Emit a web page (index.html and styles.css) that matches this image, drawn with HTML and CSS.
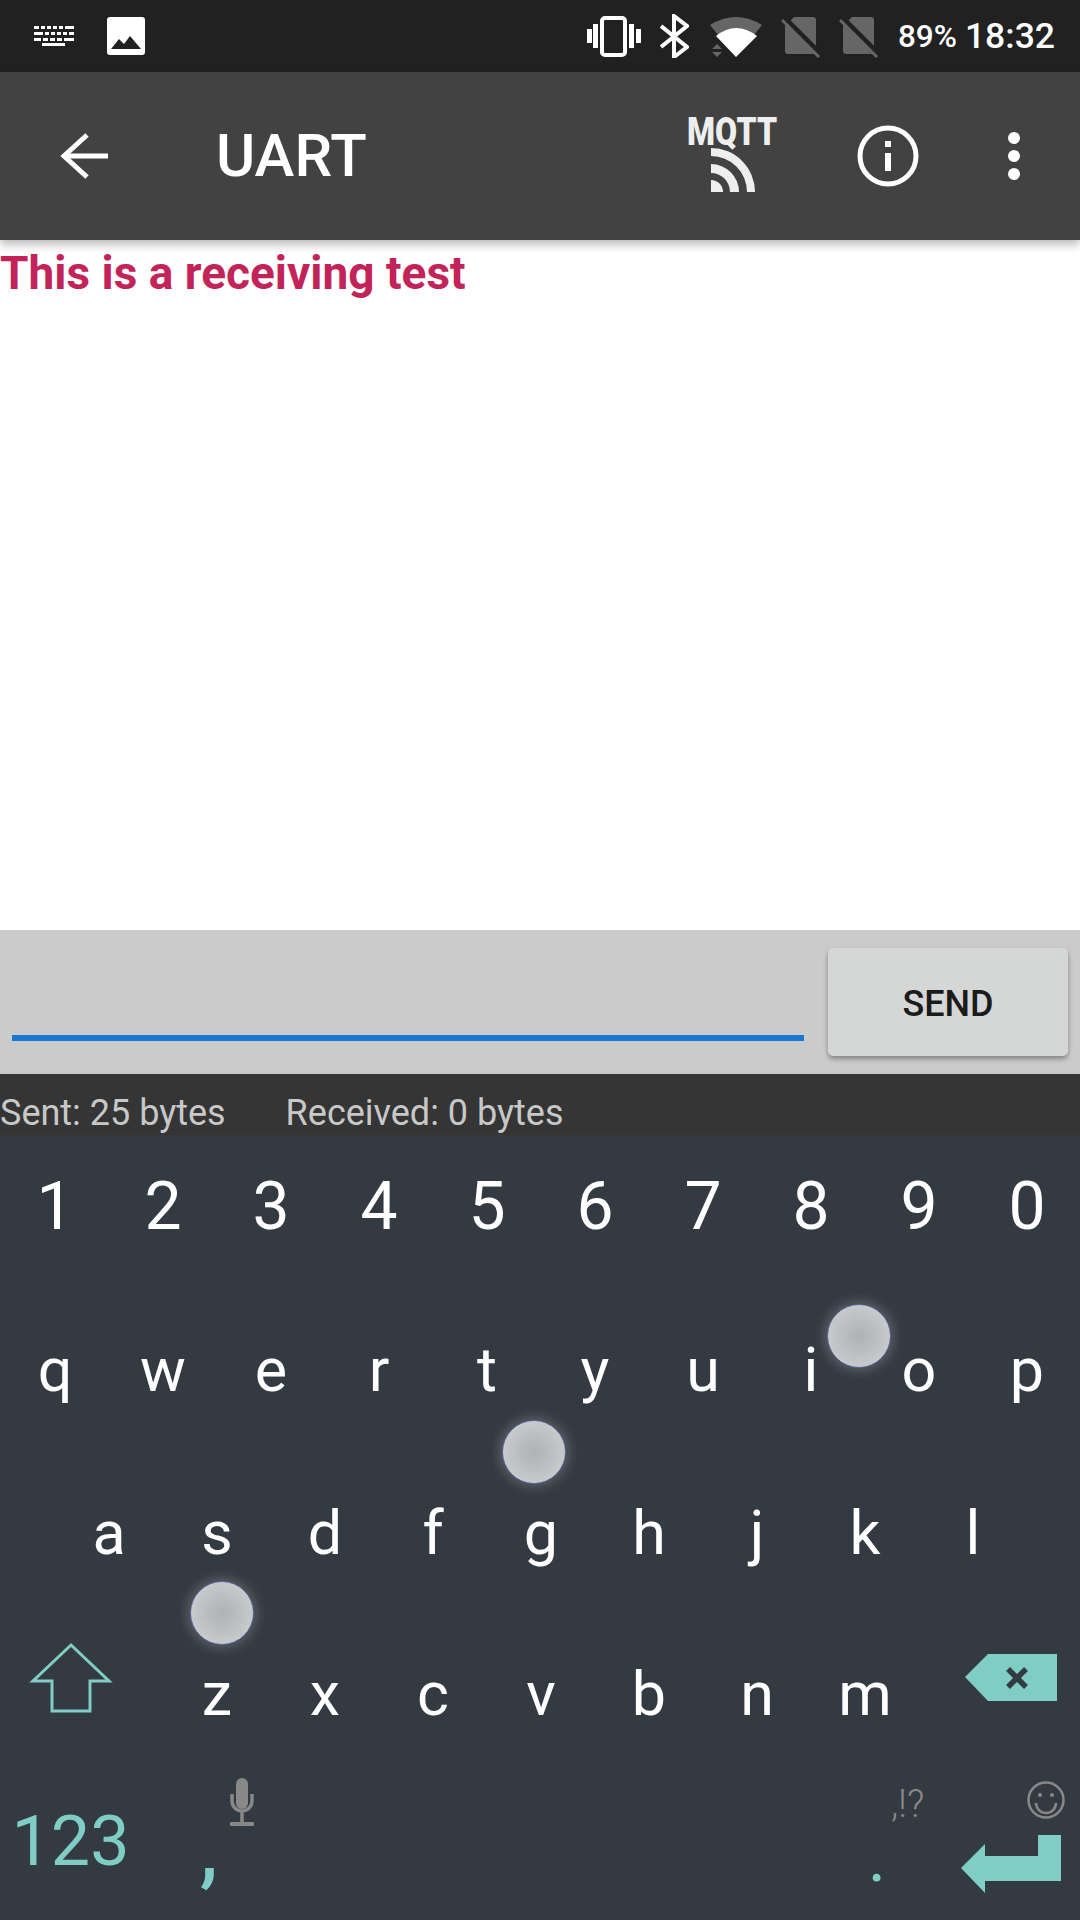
FILE: index.html
```html
<!DOCTYPE html>
<html lang="en">
<head>
<meta charset="utf-8">
<title>UART</title>
<link rel="stylesheet" href="styles.css">
</head>
<body>
<div class="screen">
  <header class="status">
    <svg class="ic" width="40" height="22" viewBox="34 26 40 22" fill="#fff">
      <path d="M34 27h5v3h-5zM41 27h4v3h-4zM47 27h4v3h-4zM53 27h4v3h-4zM59 27h4v3h-4zM65 27h9v3h-9zM34 33h9v3h-9zM45 33h4v3h-4zM51 33h4v3h-4zM57 33h4v3h-4zM63 33h4v3h-4zM69 33h5v3h-5zM34 39h7v3h-7zM43 39h5v3h-5zM50 39h5v3h-5zM57 39h5v3h-5zM64 39h10v3H64zM42 44h23v3H42z"/>
    </svg>
    <svg class="ic img" width="38" height="38" viewBox="107 17 38 38">
      <rect x="107" y="17" width="38" height="38" rx="3" fill="#fff"/>
      <path d="M111 49l8-10 5 5 6-8 11 13z" fill="#212121"/>
    </svg>
    <div class="grow"></div>
    <div class="status-right">
      <svg class="ic" width="56" height="44" viewBox="586 14 56 44" fill="#fff">
        <rect x="602" y="18" width="23" height="37" rx="3" fill="none" stroke="#fff" stroke-width="4"/>
        <path d="M587 29h5v14h-5zM593 24h5v24h-5zM629 24h5v24h-5zM636 29h5v14h-5z"/>
      </svg>
      <svg class="ic" width="29" height="44" viewBox="660 14 29 44">
        <path d="M661 26L687 47 674 57V16L687 26 661 47" fill="none" stroke="#fff" stroke-width="4"/>
      </svg>
      <svg class="ic" width="56" height="44" viewBox="707 14 56 44">
        <path d="M710 25Q736 9 762 25L736 57z" fill="#666"/>
        <path d="M716 36Q736 20 757 36L736 57z" fill="#fff"/>
        <path d="M717 44l5 5h-10zM717 57l-5-5h10z" fill="#666"/>
      </svg>
      <svg class="ic" width="40" height="44" viewBox="781 14 40 44">
        <path d="M794 17h19a3 3 0 0 1 3 3v31a3 3 0 0 1-3 3h-25a3 3 0 0 1-3-3V26z" fill="#666"/>
        <path d="M780 14l40 40" stroke="#212121" stroke-width="6"/>
        <path d="M782 20l37 37" stroke="#666" stroke-width="3"/>
      </svg>
      <svg class="ic" width="40" height="44" viewBox="781 14 40 44">
        <path d="M794 17h19a3 3 0 0 1 3 3v31a3 3 0 0 1-3 3h-25a3 3 0 0 1-3-3V26z" fill="#666"/>
        <path d="M780 14l40 40" stroke="#212121" stroke-width="6"/>
        <path d="M782 20l37 37" stroke="#666" stroke-width="3"/>
      </svg>
      <div class="clock"><span class="pct">89%</span><span class="time">18:32</span></div>
    </div>
  </header>

  <nav class="toolbar">
    <svg class="ic back" width="52" height="52" viewBox="58 130 52 52">
      <path d="M108 156H65M87 135L64 156 87 177" fill="none" stroke="#fff" stroke-width="5"/>
    </svg>
    <h1 class="title">UART</h1>
    <div class="grow"></div>
    <div class="mqtt">
      <span class="mqtt-text">MQTT</span>
      <svg class="ic mqtt-rss" width="46" height="44" viewBox="711 148 46 44" fill="#eee">
        <path d="M711 180a12 12 0 0 1 12 12h-12z"/>
        <path d="M711 164a28 28 0 0 1 28 28h-9a19 19 0 0 0-19-19z"/>
        <path d="M711 148a44 44 0 0 1 44 44h-8a36 36 0 0 0-36-36z"/>
      </svg>
    </div>
    <svg class="ic info" width="64" height="64" viewBox="856 124 64 64">
      <circle cx="888" cy="156" r="28" fill="none" stroke="#fff" stroke-width="5"/>
      <path d="M885 141h6v6h-6zM885 153h6v18h-6z" fill="#fff"/>
    </svg>
    <svg class="ic more" width="12" height="48" viewBox="1008 132 12 48" fill="#fff">
      <circle cx="1014" cy="138" r="6"/><circle cx="1014" cy="156" r="6"/><circle cx="1014" cy="174" r="6"/>
    </svg>
  </nav>

  <main class="log">This is a receiving test</main>

  <section class="composer">
    <div class="field"></div>
    <button class="send">SEND</button>
  </section>

  <section class="counters">
    <span class="sent">Sent: 25 bytes</span>
    <span>Received: 0 bytes</span>
  </section>

  <section class="keyboard">
    <div class="row row-digits">
      <span class="key">1</span><span class="key">2</span><span class="key">3</span><span class="key">4</span><span class="key">5</span><span class="key">6</span><span class="key">7</span><span class="key">8</span><span class="key">9</span><span class="key">0</span>
    </div>
    <div class="row">
      <span class="key">q</span><span class="key">w</span><span class="key">e</span><span class="key">r</span><span class="key">t</span><span class="key">y</span><span class="key">u</span><span class="key">i</span><span class="key">o</span><span class="key">p</span>
    </div>
    <div class="row row-home">
      <span class="key">a</span><span class="key">s</span><span class="key">d</span><span class="key">f</span><span class="key">g</span><span class="key">h</span><span class="key">j</span><span class="key">k</span><span class="key">l</span>
    </div>
    <div class="row row-lower">
      <span class="key wide shift">
        <svg width="84" height="72" viewBox="29 1641 84 72">
          <path d="M71 1644L33 1680H52V1710H90V1680H109z" fill="none" stroke="#7fcdc4" stroke-width="3"/>
        </svg>
      </span>
      <span class="key">z</span><span class="key">x</span><span class="key">c</span><span class="key">v</span><span class="key">b</span><span class="key">n</span><span class="key">m</span>
      <span class="key wide del">
        <svg width="94" height="48" viewBox="964 1653 94 48">
          <path d="M965 1676L988 1653H1057V1700H988z" fill="#7fcdc4"/>
          <path d="M1008 1668L1026 1686M1026 1668L1008 1686" stroke="#343a41" stroke-width="5.5"/>
        </svg>
      </span>
    </div>
    <div class="row row-bottom">
      <span class="key num">123</span>
      <span class="key comma">,
        <svg class="hint-mic" width="26" height="50" viewBox="230 1778 26 50">
          <rect x="237" y="1779" width="12" height="31" rx="6" fill="#888"/>
          <path d="M233 1795v7a10 10 0 0 0 20 0v-7M243 1812v13" fill="none" stroke="#888" stroke-width="3.5"/>
          <rect x="231" y="1823" width="24" height="4" rx="1" fill="#888"/>
        </svg>
      </span>
      <div class="grow"></div>
      <span class="key dot">.
        <span class="hint-punct">,!?</span>
      </span>
      <span class="key enter">
        <svg class="hint-smile" width="40" height="40" viewBox="1026 1778 40 40">
          <circle cx="1046" cy="1798" r="17.5" fill="none" stroke="#888" stroke-width="2.5"/>
          <circle cx="1040" cy="1793" r="2" fill="#888"/><circle cx="1052" cy="1793" r="2" fill="#888"/>
          <path d="M1036 1801a10 10 0 0 0 20 0" fill="none" stroke="#888" stroke-width="2.5"/>
        </svg>
        <svg class="enter-arrow" width="102" height="60" viewBox="960 1834 102 60">
          <path d="M961 1868L985 1844V1856H1038V1835H1061V1881H985V1893z" fill="#7fcdc4"/>
        </svg>
      </span>
    </div>
    <span class="touch touch-i"></span>
    <span class="touch touch-g"></span>
    <span class="touch touch-z"></span>
  </section>
</div>
</body>
</html>
```
FILE: styles.css
```css
* { box-sizing: border-box; }
html, body { margin: 0; padding: 0; background: #343a41; }
.screen {
  width: 1080px;
  height: 1920px;
  overflow: hidden;
  display: flex;
  flex-direction: column;
  font-family: Roboto, "Noto Sans", sans-serif;
}
.ic { display: block; flex: none; }
.grow { flex: 1; }

.status {
  height: 72px;
  flex: none;
  background: #212121;
  display: flex;
  align-items: center;
  padding: 0 25px 0 34px;
  color: #fff;
}
.img { margin-left: 33px; }
.status-right { display: flex; align-items: center; gap: 18px; }
.clock { display: flex; align-items: center; gap: 8px; margin-left: 1px; }
.pct { font-size: 31.5px; font-weight: 500; }
.time { font-size: 35.5px; font-weight: 500; }

.toolbar {
  height: 168px;
  flex: none;
  background: #424242;
  display: flex;
  align-items: center;
  padding: 0 60px 0 58px;
  color: #fff;
  position: relative;
  box-shadow: 0 4px 10px rgba(0, 0, 0, 0.3);
  z-index: 1;
}
.title { margin: 0 0 0 106px; font-size: 60px; font-weight: 500; line-height: 1; }
.mqtt { width: 90px; margin-top: -4px; flex: none; }
.mqtt-text {
  display: block;
  width: 110px;
  height: 30px;
  font-size: 39px;
  font-weight: 900;
  line-height: 32px;
  color: #eee;
  white-space: nowrap;
  transform: scaleX(0.82);
  transform-origin: left center;
}
.mqtt-rss { margin: 2px 0 0 24px; }
.info { margin-left: 79px; }
.more { margin-left: 88px; }

.log {
  height: 690px;
  flex: none;
  background: #fff;
  color: #c2245a;
  font-size: 46px;
  font-weight: 700;
  line-height: 66px;
}

.composer {
  height: 144px;
  flex: none;
  background: #cbcbcb;
  display: flex;
  align-items: flex-start;
  padding: 18px 12px 0;
}
.field {
  width: 792px;
  height: 6px;
  margin-top: 87px;
  background: #1976d2;
}
.send {
  width: 240px;
  height: 108px;
  margin-left: 24px;
  padding: 4px 0 0;
  border: 0;
  border-radius: 5px;
  background: #d5d6d6;
  color: #1b1b1b;
  font-family: inherit;
  font-size: 36px;
  font-weight: 500;
  box-shadow: 0 3px 5px rgba(0, 0, 0, 0.35);
}

.counters {
  height: 61px;
  flex: none;
  background: #353535;
  color: #c8c8c8;
  font-size: 36px;
  line-height: 78px;
  white-space: nowrap;
  overflow: hidden;
}
.sent { margin-right: 51px; }

.keyboard {
  flex: 1;
  background: #343a41;
  position: relative;
  color: #fff;
}
.row { display: flex; height: 163px; align-items: center; }
.row-digits { margin-top: -10px; }
.row-digits .key { font-size: 66px; }
.row-home { padding-left: 54px; }
.row-lower { margin-top: -2px; margin-bottom: 2px; }
.key {
  width: 108px;
  padding-left: 2px;
  flex: none;
  text-align: center;
  font-size: 61px;
  line-height: 70px;
  display: block;
}
.wide { width: 162px; padding-left: 0; }
.shift { padding-right: 20px; display: flex; justify-content: center; margin-bottom: 32px; }
.del { display: flex; justify-content: flex-end; padding-right: 22px; margin-bottom: 32px; }
.row-bottom { position: relative; margin-top: -18px; }
.num { width: 141px; padding-left: 0; font-size: 70px; color: #7fcdc4; }
.comma {
  color: #7fcdc4;
  font-size: 82px;
  font-weight: 500;
  position: relative;
  margin-top: 16px;
  margin-left: 13px;
}
.hint-mic { position: absolute; left: 75px; top: -37px; }
.dot {
  color: #7fcdc4;
  font-size: 70px;
  position: relative;
  margin-top: 32px;
  padding-left: 26px;
}
.hint-punct { position: absolute; left: 81px; top: -53px; font-size: 38px; font-weight: 300; color: #888; }
.enter { width: 162px; padding-left: 0; position: relative; height: 70px; display: flex; justify-content: flex-end; padding-right: 18px; }
.enter-arrow { margin-top: 28px; }
.hint-smile { position: absolute; right: 14px; top: -26px; }

.touch {
  position: absolute;
  width: 64px;
  height: 64px;
  border-radius: 50%;
  background: radial-gradient(circle, #aeb2b5 0%, #c9cbcc 75%);
  border: 1.5px solid #5f6ba6;
  box-shadow: 0 0 12px 3px rgba(255, 255, 255, 0.2);
}
.touch-i { left: 827px; top: 169px; }
.touch-g { left: 502px; top: 285px; }
.touch-z { left: 190px; top: 446px; }
```
